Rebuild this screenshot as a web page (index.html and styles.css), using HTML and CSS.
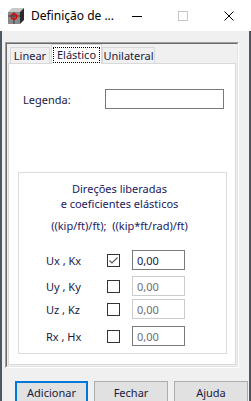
FILE: index.html
```html
<!DOCTYPE html>
<html lang="pt">
<head>
<meta charset="utf-8">
<title>Definição de ...</title>
<link rel="stylesheet" href="styles.css">
</head>
<body>
<div class="window">
  <div class="titlebar">
    <svg class="appicon" viewBox="0 0 16 16" width="16" height="16">
      <polygon points="0,4 4,0 16,0 12,4" fill="#c8c8c8"/>
      <polygon points="12,4 16,0 16,12 12,16" fill="#2b2b2b"/>
      <rect x="0" y="4" width="12" height="12" fill="#8a8a8a"/>
      <line x1="0" y1="8" x2="12" y2="8" stroke="#3a3a3a" stroke-width="1"/>
      <line x1="6" y1="4" x2="6" y2="16" stroke="#3a3a3a" stroke-width="1"/>
      <circle cx="6" cy="8.5" r="2.6" fill="none" stroke="#e00000" stroke-width="1.4"/>
    </svg>
    <span class="title">Definição de ...</span>
    <div class="controls">
      <span class="ctl"><svg width="10" height="10" viewBox="0 0 10 10"><line x1="0" y1="5.5" x2="10" y2="5.5" stroke="#000" stroke-width="1"/></svg></span>
      <span class="ctl"><svg width="10" height="10" viewBox="0 0 10 10"><rect x="0.5" y="0.5" width="9" height="9" fill="none" stroke="#c6c6c6" stroke-width="1"/></svg></span>
      <span class="ctl"><svg width="10" height="10" viewBox="0 0 10 10"><path d="M0.5 0.5 L9.5 9.5 M9.5 0.5 L0.5 9.5" stroke="#000" stroke-width="1"/></svg></span>
    </div>
  </div>
  <div class="client">
    <div class="frame">
      <div class="frame-inner">
        <div class="tabstrip">
          <div class="tab tab-linear">Linear</div>
          <div class="tab tab-active"><span class="focusrect">Elástico</span></div>
          <div class="tab tab-unilateral">Unilateral</div>
        </div>
        <div class="page">
          <div class="legend-row">
            <span class="legend-label">Legenda:</span>
            <div class="field field-wide"></div>
          </div>
          <div class="group">
            <div class="group-title">Direções liberadas<br>e coeficientes elásticos</div>
            <div class="group-units">((kip/ft)/ft);&nbsp; ((kip*ft/rad)/ft)</div>
            <div class="row row-ux">
              <span class="row-label">Ux , Kx</span>
              <span class="check"><svg width="11" height="11" viewBox="0 0 11 11"><polyline points="1.5,5.5 4,8 9.5,2.5" fill="none" stroke="#5a5a5a" stroke-width="1.2"/></svg></span>
              <div class="field field-small">0,00</div>
            </div>
            <div class="row row-uy">
              <span class="row-label">Uy , Ky</span>
              <span class="check"></span>
              <div class="field field-small field-disabled">0,00</div>
            </div>
            <div class="row row-uz">
              <span class="row-label">Uz , Kz</span>
              <span class="check"></span>
              <div class="field field-small field-disabled">0,00</div>
            </div>
            <div class="row row-rx">
              <span class="row-label">Rx , Hx</span>
              <span class="check"></span>
              <div class="field field-small field-hover">0,00</div>
            </div>
          </div>
        </div>
      </div>
    </div>
    <div class="buttons">
      <div class="btn btn-default">Adicionar</div>
      <div class="btn">Fechar</div>
      <div class="btn">Ajuda</div>
    </div>
  </div>
</div>
</body>
</html>
```

FILE: styles.css
```css
* { box-sizing: border-box; }
html, body { margin: 0; padding: 0; }
body {
  width: 251px;
  height: 401px;
  overflow: hidden;
  background: #ffffff;
  font-family: "Noto Sans", "Open Sans", sans-serif;
  font-size: 11px;
  color: #1a1a40;
}
.window {
  width: 251px;
  height: 401px;
  display: flex;
  flex-direction: column;
}
.titlebar {
  height: 31px;
  flex: none;
  display: flex;
  align-items: center;
  background: #ffffff;
  padding-left: 8px;
  padding-right: 1px;
}
.appicon { display: block; flex: none; }
.title {
  margin-left: 7px;
  font-size: 12px;
  color: #000;
  white-space: nowrap;
  flex: none;
}
.controls { margin-left: auto; display: flex; flex: none; }
.ctl {
  width: 46px;
  height: 31px;
  display: flex;
  align-items: center;
  justify-content: center;
}
.ctl svg { display: block; }
.client {
  flex: 1;
  background: #f0f0f0;
  border-left: 2px solid #4e5563;
  border-right: 2px solid #4e5563;
  display: flex;
  flex-direction: column;
}
.frame {
  margin-top: 11px;
  margin-left: 3px;
  width: 234px;
  height: 326px;
  border: 1px solid;
  border-color: #a0a0a0 #ffffff #ffffff #a0a0a0;
}
.frame-inner {
  height: 100%;
  border: 1px solid;
  border-color: #696969 #e3e3e3 #e3e3e3 #696969;
  display: flex;
  flex-direction: column;
}
.tabstrip {
  height: 19px;
  flex: none;
  display: flex;
  align-items: flex-end;
  padding-left: 3px;
  position: relative;
  z-index: 1;
}
.tab {
  height: 16px;
  border: 1px solid #d9d9d9;
  border-bottom: none;
  background: #f0f0f0;
  display: flex;
  align-items: center;
  justify-content: center;
  color: #1a1a40;
  white-space: nowrap;
}
.tab-linear { width: 40px; }
.tab-active {
  width: 51px;
  height: 20px;
  margin-left: 1px;
  margin-bottom: -1px;
  background: #ffffff;
}
.tab-unilateral { width: 53px; }
.focusrect {
  border: 1px dotted #000;
  line-height: 14px;
  width: 47px;
  text-align: center;
}
.page {
  margin-left: 1px;
  width: 228px;
  height: 302px;
  background: #ffffff;
  border: 1px solid #d9d9d9;
  display: flex;
  flex-direction: column;
}
.legend-row {
  margin-top: 25px;
  padding-left: 14px;
  display: flex;
  align-items: center;
}
.legend-label { width: 82px; }
.field {
  height: 20px;
  border: 1px solid #7a7a7a;
  background: #fff;
  padding-left: 4px;
  display: flex;
  align-items: center;
  color: #1a1a40;
}
.field-wide { width: 119px; }
.group {
  margin-top: 63px;
  margin-left: 9px;
  width: 209px;
  height: 182px;
  border: 1px solid #dcdcdc;
  display: flex;
  flex-direction: column;
}
.group-title {
  margin-top: 8px;
  line-height: 15px;
  text-align: center;
  padding-right: 6px;
  color: #1a1a60;
}
.group-units {
  margin-top: 7px;
  line-height: 15px;
  text-align: center;
  padding-right: 6px;
  color: #1a1a60;
}
.row {
  display: flex;
  align-items: center;
  padding-left: 27px;
  height: 20px;
}
.row-ux { margin-top: 17px; }
.row-uy { margin-top: 6px; }
.row-uz { margin-top: 3px; }
.row-rx { margin-top: 7px; }
.row-label { width: 61px; }
.check {
  width: 13px;
  height: 13px;
  border: 1px solid #333333;
  background: #fff;
  display: flex;
  align-items: center;
  justify-content: center;
}
.check svg { display: block; }
.field-small { width: 53px; margin-left: 12px; }
.field-disabled { border-color: #cccccc; color: #6d6d6d; }
.field-hover { color: #6d6d6d; }
.buttons {
  margin-top: 13px;
  padding-left: 13px;
  display: flex;
  gap: 6px;
}
.btn {
  width: 74px;
  height: 23px;
  flex: none;
  background: #e1e1e1;
  border: 1px solid #adadad;
  display: flex;
  align-items: center;
  justify-content: center;
  color: #1a1a40;
}
.btn-default {
  width: 73px;
  border: 2px solid #0078d7;
}
```
